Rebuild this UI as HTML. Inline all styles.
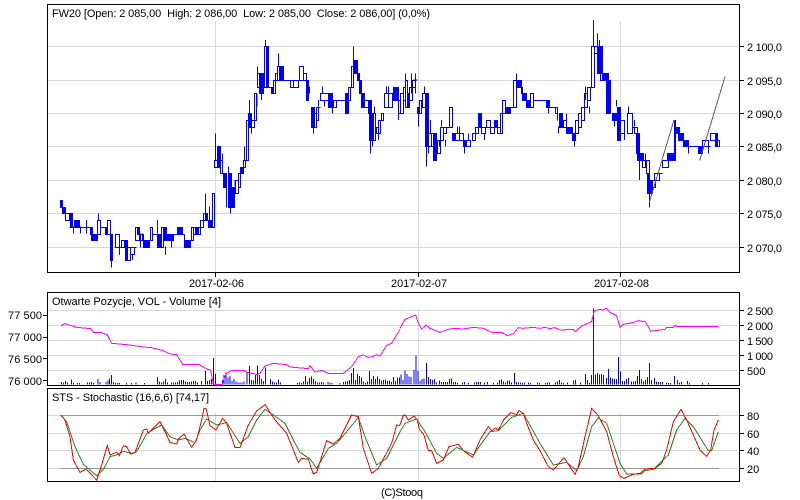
<!DOCTYPE html>
<html><head><meta charset="utf-8"><style>
html,body{margin:0;padding:0;background:#fff}
svg{display:block}
text{font-family:"Liberation Sans",Arial,sans-serif;font-size:11px;fill:#000;white-space:pre}
</style></head><body>
<svg xmlns="http://www.w3.org/2000/svg" width="800" height="500" viewBox="0 0 800 500">
<rect width="800" height="500" fill="#fff"/>
<g stroke="#d9d9d9" stroke-width="1" shape-rendering="crispEdges" fill="none">
<path d="M48 46.5H739M48 80.5H739M48 113.5H739M48 146.5H739M48 180.5H739M48 213.5H739M48 247.5H739"/>
<path d="M215.5 21V272M418.5 21V272M620.5 21V272"/>
<path d="M48 310.5H739M48 325.5H739M48 340.5H739M48 355.5H739M48 370.5H739"/>
<path d="M215.5 309V386M418.5 309V386M620.5 309V386"/>
<path d="M48 415.5H739M48 433.5H739M48 450.5H739M48 468.5H739"/>
<path d="M215.5 413V482M418.5 413V482M620.5 413V482"/>
</g>
<path shape-rendering="crispEdges" fill="none" stroke="#999" d="M60 415.5H719M60 468.5H719"/>

<!-- price: hollow -->
<path shape-rendering="crispEdges" fill="none" stroke="#0000ff" d="M65.5 213.5H69.5V220.5H65.5ZM69.5 227.5H90.5M97.5 220.5H100.5V234.5H97.5ZM100.5 227.5H105.5M107.5 220.5H110.5V234.5H107.5ZM115.5 234.5H119.5V247.5H115.5ZM119.5 247.5H125.5M121.5 240.5H124.5V247.5H121.5ZM127.5 247.5H130.5V260.5H127.5ZM130.5 247.5H134.5V254.5H130.5ZM134.5 247.5H136.5M135.5 227.5H139.5V240.5H135.5ZM139.5 234.5H143.5V240.5H139.5ZM149.5 240.5H150.5M150.5 227.5H152.5V240.5H150.5ZM152.5 234.5H157.5M161.5 227.5H163.5V247.5H161.5ZM173.5 234.5H177.5M182.5 234.5H184.5M184.5 234.5V247.5M191.5 227.5H193.5V240.5H191.5ZM193.5 227.5H200.5V234.5H193.5ZM200.5 220.5H203.5V227.5H200.5ZM203.5 213.5H207.5V220.5H203.5ZM212.5 193.5H214.5V227.5H212.5ZM214.5 160.5H217.5V167.5H214.5ZM220.5 160.5H222.5V173.5H220.5ZM235.5 180.5H238.5V193.5H235.5ZM238.5 173.5H240.5V187.5H238.5ZM243.5 160.5H245.5V167.5H243.5ZM246.5 120.5H248.5V160.5H246.5ZM251.5 120.5H254.5V127.5H251.5ZM254.5 93.5H256.5V120.5H254.5ZM257.5 73.5H259.5V87.5H257.5ZM264.5 46.5H266.5V87.5H264.5ZM268.5 87.5H271.5M273.5 80.5H275.5V93.5H273.5ZM275.5 73.5H277.5V80.5H275.5ZM277.5 66.5H279.5V80.5H277.5ZM283.5 80.5H290.5M290.5 80.5H293.5V87.5H290.5ZM293.5 80.5H298.5V87.5H293.5ZM299.5 66.5H303.5V80.5H299.5ZM303.5 73.5H306.5V80.5H303.5ZM314.5 113.5H316.5V127.5H314.5ZM316.5 107.5H318.5V120.5H316.5ZM318.5 107.5H320.5M320.5 93.5H328.5V100.5H320.5ZM333.5 100.5H336.5V107.5H333.5ZM336.5 100.5H345.5M348.5 87.5H350.5V100.5H348.5ZM351.5 66.5H353.5V87.5H351.5ZM364.5 100.5H368.5V107.5H364.5ZM373.5 113.5H375.5V140.5H373.5ZM376.5 127.5H378.5V133.5H376.5ZM378.5 120.5H380.5V133.5H378.5ZM381.5 113.5H383.5V120.5H381.5ZM384.5 93.5H388.5V107.5H384.5ZM388.5 93.5H392.5V107.5H388.5ZM398.5 100.5H400.5V113.5H398.5ZM400.5 93.5H403.5V113.5H400.5ZM403.5 87.5H405.5V100.5H403.5ZM405.5 80.5H407.5V107.5H405.5ZM409.5 87.5H412.5V100.5H409.5ZM412.5 80.5H415.5V87.5H412.5ZM419.5 100.5H421.5V113.5H419.5ZM422.5 93.5H426.5V107.5H422.5ZM428.5 133.5H431.5V146.5H428.5ZM431.5 133.5H434.5V146.5H431.5ZM437.5 140.5H440.5V153.5H437.5ZM440.5 127.5H443.5V140.5H440.5ZM443.5 127.5H446.5V133.5H443.5ZM446.5 127.5H449.5M449.5 107.5H452.5V127.5H449.5ZM455.5 133.5H459.5V140.5H455.5ZM459.5 133.5H463.5V140.5H459.5ZM466.5 140.5H470.5V146.5H466.5ZM472.5 133.5H475.5V140.5H472.5ZM475.5 127.5H478.5V133.5H475.5ZM481.5 127.5H485.5V133.5H481.5ZM486.5 120.5H490.5V127.5H486.5ZM490.5 127.5H494.5V133.5H490.5ZM497.5 127.5H500.5V133.5H497.5ZM500.5 113.5H502.5V133.5H500.5ZM502.5 100.5H505.5V113.5H502.5ZM510.5 107.5H513.5M513.5 80.5H516.5V107.5H513.5ZM521.5 87.5H522.5V93.5H521.5ZM530.5 93.5H533.5V107.5H530.5ZM533.5 100.5H546.5M549.5 107.5H555.5M555.5 107.5H557.5V113.5H555.5ZM557.5 113.5V120.5M563.5 120.5H566.5V127.5H563.5ZM575.5 120.5H578.5V133.5H575.5ZM578.5 113.5H581.5V127.5H578.5ZM581.5 107.5H584.5V120.5H581.5ZM584.5 93.5H587.5V107.5H584.5ZM587.5 87.5H590.5V100.5H587.5ZM591.5 46.5H594.5V87.5H591.5ZM594.5 46.5H597.5V53.5H594.5ZM600.5 73.5H603.5V80.5H600.5ZM618.5 120.5H624.5V133.5H618.5ZM627.5 113.5H632.5V133.5H627.5ZM632.5 127.5H634.5M634.5 127.5H637.5V133.5H634.5ZM642.5 160.5H645.5V167.5H642.5ZM646.5 160.5H649.5V173.5H646.5ZM652.5 180.5H655.5V187.5H652.5ZM654.5 173.5H659.5V180.5H654.5ZM659.5 173.5H662.5M662.5 160.5H668.5V167.5H662.5ZM674.5 120.5H675.5V160.5H674.5ZM688.5 146.5H698.5M702.5 140.5H708.5V146.5H702.5ZM708.5 146.5H710.5M710.5 133.5H715.5V140.5H710.5ZM717.5 140.5H719.5V146.5H717.5Z"/>
<!-- price: filled -->
<path shape-rendering="crispEdges" fill="#0000ff" stroke="#0000ff" d="M60.5 200.5H62.5V207.5H60.5ZM62.5 207.5H65.5V213.5H62.5ZM70.5 213.5H72.5V227.5H70.5ZM74.5 220.5H79.5V227.5H74.5ZM90.5 227.5H92.5V234.5H90.5ZM91.5 234.5H97.5V240.5H91.5ZM105.5 227.5H107.5V234.5H105.5ZM110.5 234.5H112.5V260.5H110.5ZM125.5 240.5H127.5V260.5H125.5ZM137.5 227.5H139.5V234.5H137.5ZM143.5 240.5H149.5V247.5H143.5ZM157.5 234.5H161.5V247.5H157.5ZM163.5 227.5H166.5V240.5H163.5ZM167.5 234.5H173.5V240.5H167.5ZM177.5 227.5H182.5V234.5H177.5ZM184.5 240.5H190.5V247.5H184.5ZM195.5 227.5H198.5V234.5H195.5ZM205.5 213.5H207.5V220.5H205.5ZM208.5 220.5H212.5V227.5H208.5ZM217.5 146.5H220.5V167.5H217.5ZM223.5 173.5H226.5V187.5H223.5ZM228.5 173.5H231.5V207.5H228.5ZM232.5 187.5H234.5V207.5H232.5ZM240.5 167.5H243.5V173.5H240.5ZM248.5 113.5H251.5V127.5H248.5ZM259.5 73.5H263.5V93.5H259.5ZM266.5 46.5H268.5V87.5H266.5ZM271.5 87.5H273.5V93.5H271.5ZM279.5 66.5H283.5V80.5H279.5ZM306.5 80.5H308.5V100.5H306.5ZM311.5 107.5H314.5V127.5H311.5ZM328.5 93.5H332.5V107.5H328.5ZM345.5 93.5H348.5V113.5H345.5ZM353.5 60.5H357.5V73.5H353.5ZM357.5 73.5H359.5V80.5H357.5ZM359.5 80.5H361.5V93.5H359.5ZM361.5 93.5H364.5V107.5H361.5ZM368.5 100.5H371.5V113.5H368.5ZM369.5 113.5H372.5V140.5H369.5ZM393.5 87.5H398.5V100.5H393.5ZM407.5 93.5H409.5V107.5H407.5ZM417.5 107.5H419.5V113.5H417.5ZM425.5 93.5H428.5V146.5H425.5ZM433.5 133.5H436.5V160.5H433.5ZM452.5 133.5H455.5V140.5H452.5ZM463.5 140.5H466.5V146.5H463.5ZM478.5 113.5H481.5V127.5H478.5ZM494.5 120.5H497.5V127.5H494.5ZM505.5 107.5H510.5V113.5H505.5ZM517.5 80.5H521.5V87.5H517.5ZM522.5 93.5H526.5V100.5H522.5ZM526.5 100.5H530.5V107.5H526.5ZM546.5 100.5H549.5V107.5H546.5ZM559.5 113.5H562.5V127.5H559.5ZM566.5 127.5H572.5V133.5H566.5ZM572.5 133.5H575.5V140.5H572.5ZM597.5 46.5H602.5V73.5H597.5ZM602.5 73.5H608.5V80.5H602.5ZM606.5 80.5H610.5V113.5H606.5ZM612.5 113.5H617.5V120.5H612.5ZM617.5 107.5H620.5V140.5H617.5ZM636.5 133.5H639.5V153.5H636.5ZM637.5 153.5H643.5V160.5H637.5ZM647.5 173.5H649.5V193.5H647.5ZM648.5 180.5H652.5V193.5H648.5ZM667.5 153.5H674.5V160.5H667.5ZM675.5 127.5H679.5V133.5H675.5ZM678.5 133.5H683.5V140.5H678.5ZM683.5 140.5H688.5V146.5H683.5ZM698.5 146.5H702.5V153.5H698.5ZM715.5 133.5H717.5V146.5H715.5Z"/>
<!-- wicks, left half -->
<g transform="scale(.33333)" fill="none" stroke="#0000ff" stroke-width="3" shape-rendering="crispEdges">
<path d="M295 640V660M259 660V700M241 680V700M220 680V700M334 780V803M358 740V765M397 760V780M422 700V742M472 660V700M496 740V765M514 720V742M427 700V720M616 580V640M628 620V680M646 400V480M667 460V520M685 500V520M680 560V622M691 622V640M705 540V560M733 440V480M748 300V340M754 380V400M772 200V220M771 280V320M784 280V300M796 120V140M835 160V200M928 260V280M940 380V400M955 300V320M967 260V280M973 300V320M997 320V340M1060 140V180M1111 420V460M1117 420V440M1123 320V340M1135 400V420M1160 260V280M1166 260V280M1196 340V360"/>
</g>
<g transform="translate(400,0) scale(.33333)" fill="none" shape-rendering="crispEdges" stroke-width="3" stroke="#0000ff">
<path d="M16 220V240M34 220V280M46 220V280M40 240H52M55 340V380M73 260V280M79 440V500M85 440V460M91 360V400M118 420V440M124 360V380M136 420V440M172 380V400M178 380V400M193 440V460M205 400V420M253 400V420M349 220V240M445 320V340M475 380V400M500 340V360M523 420V440M556 260V300M568 320V340M580 60V140M592 100V140M598 120V140M604 140V180M628 240V260M649 300V320M643 360V380M673 380V420M685 320V340M703 360V380M718 480V540M736 460V480M748 580V622M787 480V500M865 440V460M907 420V440M925 440V460"/>
</g>
<g transform="translate(400,0) scale(.33333)" fill="none" stroke="#606060" stroke-width="3" shape-rendering="crispEdges">
<path d="M748 607L822 360M899 482L975 230"/>
</g>

<!-- volume -->
<g transform="translate(0,280) scale(.33333)" fill="none" stroke="#0000ff" stroke-width="3" shape-rendering="crispEdges">
<path d="M184 313V306M190 313V307M196 313V303M202 313V308M214 313V299M220 313V309M232 313V309M238 313V309M262 313V307M268 313V307M274 313V306M280 313V309M294 313V297M300 313V306M318 313V306M324 313V301M328 313V295M334 313V285M340 313V306M346 313V309M352 313V309M358 313V309M380 313V309M394 313V309M408 313V307M434 313V309M472 313V291M478 313V305M484 313V307M490 313V304M496 313V297M502 313V308M514 313V307M520 313V307M526 313V307M532 313V306M538 313V302M544 313V300M550 313V300M556 313V304M562 313V306M568 313V306M574 313V305M580 313V303M586 313V303M592 313V308M604 313V303M616 313V273M622 313V303M628 313V300M634 313V297M640 313V234M646 313V282M668 313V300M672 313V285M678 313V277M684 313V292M690 313V288M696 313V303M702 313V297M708 313V304M714 313V307M720 313V307M726 313V307M732 313V304M741 313V278M748 313V258M754 313V300M760 313V302M766 313V285M772 313V256M778 313V285M784 313V297M790 313V303M796 313V262M812 313V297M818 313V305M824 313V307M830 313V307M836 313V298M842 313V307M892 313V309M898 313V307M904 313V309M910 313V305M916 313V288M922 313V305M928 313V294M934 313V289M940 313V297M946 313V303M952 313V307M958 313V307M964 313V306M970 313V307M984 313V306M990 313V307M996 313V309M1020 313V309M1030 313V306M1036 313V304M1042 313V303M1048 313V300M1054 313V279M1060 313V264M1066 313V300M1072 313V282M1078 313V288M1084 313V292M1090 313V304M1096 313V309M1102 313V304M1108 313V273M1114 313V297M1120 313V288M1126 313V297M1132 313V290M1138 313V297M1144 313V301M1150 313V300M1156 313V299M1162 313V303M1168 313V301M1174 313V306M1180 313V291M1186 313V303M1192 313V293M1198 313V293"/>
</g>
<g transform="translate(400,280) scale(.33333)" fill="none" stroke="#0000ff" stroke-width="3" shape-rendering="crispEdges">
<path d="M3 313V283M9 313V300M15 313V272M21 313V282M27 313V290M33 313V291M42 313V270M48 313V226M54 313V273M60 313V303M66 313V297M72 313V296M79 313V249M85 313V291M91 313V297M97 313V300M103 313V297M109 313V307M118 313V301M124 313V306M130 313V306M136 313V306M142 313V306M148 313V297M154 313V295M160 313V306M166 313V306M172 313V309M187 313V308M193 313V306M205 313V309M223 313V308M229 313V306M235 313V306M241 313V306M253 313V307M262 313V306M280 313V309M292 313V308M298 313V300M304 313V298M310 313V304M316 313V308M322 313V302M328 313V302M334 313V308M343 313V279M349 313V306M355 313V307M361 313V307M367 313V309M373 313V307M385 313V308M391 313V309M412 313V308M418 313V309M436 313V309M442 313V308M448 313V308M466 313V308M472 313V304M478 313V300M484 313V307M490 313V309M502 313V307M520 313V302M526 313V300M542 313V307M556 313V282M562 313V300M568 313V309M574 313V285M580 313V85M586 313V283M592 313V279M598 313V284M604 313V282M610 313V285M619 313V294M625 313V267M631 313V293M637 313V295M643 313V297M649 313V297M655 313V231M661 313V275M667 313V303M673 313V303M679 313V297M685 313V294M694 313V304M700 313V304M706 313V303M712 313V288M718 313V270M724 313V297M730 313V305M736 313V300M742 313V291M748 313V249M754 313V300M763 313V294M769 313V305M775 313V306M781 313V306M787 313V306M799 313V307M805 313V309M811 313V309M823 313V288M832 313V300M838 313V308M844 313V306M862 313V303M868 313V309M907 313V309M925 313V309"/>
</g>

<!-- magenta, stochastic -->
<g transform="translate(0,280) scale(.33333)" fill="none" stroke-width="3" shape-rendering="crispEdges">
<polyline stroke="#ff00ff" points="183,137 195,131 230,142 272,146 280,157 305,158 322,165 335,190 390,195 430,201 455,203 490,212 510,222 530,224 548,253 595,253 605,258 620,267 632,270 640,313 667,313 672,296 680,280 695,271 730,271 745,278 770,283 780,280 795,258 820,250 860,254 870,261 925,266 930,257 945,276 965,271 985,280 1030,280 1055,260 1075,230 1090,225 1105,232 1115,231 1130,224 1140,228 1160,196 1175,190 1200,148"/>
<polyline stroke="#228b22" points="183,406 200,425 225,500 250,553 290,587 312,565 330,530 350,525 370,514 395,520 410,515 440,462 465,445 485,435 510,470 535,480 555,475 585,488 600,450 620,417 650,435 680,428 720,490 745,470 770,420 795,388 820,405 855,430 880,480 900,517 930,537 950,565 985,505 1010,490 1040,455 1075,412 1095,470 1130,555 1160,535 1200,455"/>
<polyline stroke="#ff0000" points="183,406 195,420 210,470 220,540 240,577 258,567 290,600 305,555 322,496 330,525 350,517 358,527 370,497 380,500 392,522 405,518 430,450 440,447 445,460 480,425 500,465 510,487 530,492 535,477 552,462 575,502 590,480 605,420 612,385 618,385 630,437 648,450 668,415 680,430 705,503 720,503 745,435 770,393 795,374 825,420 860,460 895,547 905,535 925,538 940,582 950,577 980,482 1000,492 1020,475 1055,405 1075,410 1090,505 1115,580 1135,565 1175,490 1190,435 1200,437"/>
</g>
<g transform="translate(400,280) scale(.33333)" fill="none" stroke-width="3" shape-rendering="crispEdges">
<polyline stroke="#ff00ff" points="0,145 15,118 30,112 47,105 55,130 65,147 78,135 90,145 120,157 145,148 165,145 190,147 220,142 250,145 275,157 305,157 322,167 340,161 355,143 370,145 400,142 420,145 435,142 450,146 465,143 480,150 520,148 525,155 545,138 575,125 582,95 595,88 610,90 620,85 630,97 650,107 660,142 670,133 690,130 715,122 735,125 745,140 752,154 780,150 795,148 800,142 820,142 825,136 833,140 955,139"/>
<polyline stroke="#228b22" points="0,455 15,430 50,417 75,455 110,520 130,535 170,502 220,525 270,455 295,452 335,412 370,400 420,490 460,555 500,547 530,572 550,530 575,440 595,414 620,430 640,490 660,550 680,582 725,582 735,572 760,568 805,525 830,450 855,415 880,440 925,512 935,512 955,455"/>
<polyline stroke="#ff0000" points="0,435 10,405 17,407 25,420 42,408 52,420 58,447 72,465 85,512 95,512 110,550 130,540 147,500 175,493 190,512 218,532 240,480 265,440 275,452 287,444 295,450 312,418 332,398 350,404 357,392 370,400 380,430 400,480 420,512 445,560 460,570 492,533 525,583 535,560 555,470 575,385 595,407 620,455 640,530 658,587 672,595 700,583 720,580 735,567 765,565 785,550 800,510 820,425 843,388 860,420 900,510 920,529 932,510 942,450 955,420"/>
</g>

<!-- frames + ticks -->
<g fill="none" stroke="#000" stroke-width="1" shape-rendering="crispEdges">
<rect x="47.5" y="4.5" width="692" height="268"/>
<rect x="47.5" y="292.5" width="692" height="93"/>
<rect x="47.5" y="388.5" width="692" height="93"/>
<path d="M739 46.5H744M739 80.5H744M739 113.5H744M739 146.5H744M739 180.5H744M739 213.5H744M739 247.5H744"/>
<path d="M215.5 272V277M418.5 272V277M620.5 272V277"/>
<path d="M739 310.5H744M739 325.5H744M739 340.5H744M739 355.5H744M739 370.5H744"/>
<path d="M43 315.5H47M43 337.5H47M43 358.5H47M43 380.5H47"/>
<path d="M739 415.5H744M739 433.5H744M739 450.5H744M739 468.5H744"/>
</g>

<text x="52" y="17" xml:space="preserve" textLength="378">FW20 [Open: 2 085,00  High: 2 086,00  Low: 2 085,00  Close: 2 086,00] (0,0%)</text>
<text x="747" y="51" textLength="35">2 100,0</text>
<text x="747" y="85" textLength="35">2 095,0</text>
<text x="747" y="118" textLength="35">2 090,0</text>
<text x="747" y="151" textLength="35">2 085,0</text>
<text x="747" y="185" textLength="35">2 080,0</text>
<text x="747" y="218" textLength="35">2 075,0</text>
<text x="747" y="252" textLength="35">2 070,0</text>
<text x="189" y="287" textLength="55">2017-02-06</text>
<text x="391" y="287" textLength="56">2017-02-07</text>
<text x="594" y="287" textLength="55">2017-02-08</text>
<text x="52" y="305" textLength="169">Otwarte Pozycje, VOL - Volume [4]</text>
<text x="8" y="319" textLength="34">77 500</text>
<text x="8" y="341" textLength="34">77 000</text>
<text x="8" y="363" textLength="34">76 500</text>
<text x="8" y="385" textLength="34">76 000</text>
<text x="747" y="315" textLength="26">2 500</text>
<text x="747" y="330" textLength="26">2 000</text>
<text x="747" y="345" textLength="26">1 500</text>
<text x="747" y="360" textLength="26">1 000</text>
<text x="747" y="375">500</text>
<text x="52" y="401" textLength="157">STS - Stochastic (16,6,6) [74,17]</text>
<text x="747" y="420">80</text>
<text x="747" y="438">60</text>
<text x="747" y="455">40</text>
<text x="747" y="473">20</text>
<text x="381" y="496" textLength="42">(C)Stooq</text>
</svg>
</body></html>
